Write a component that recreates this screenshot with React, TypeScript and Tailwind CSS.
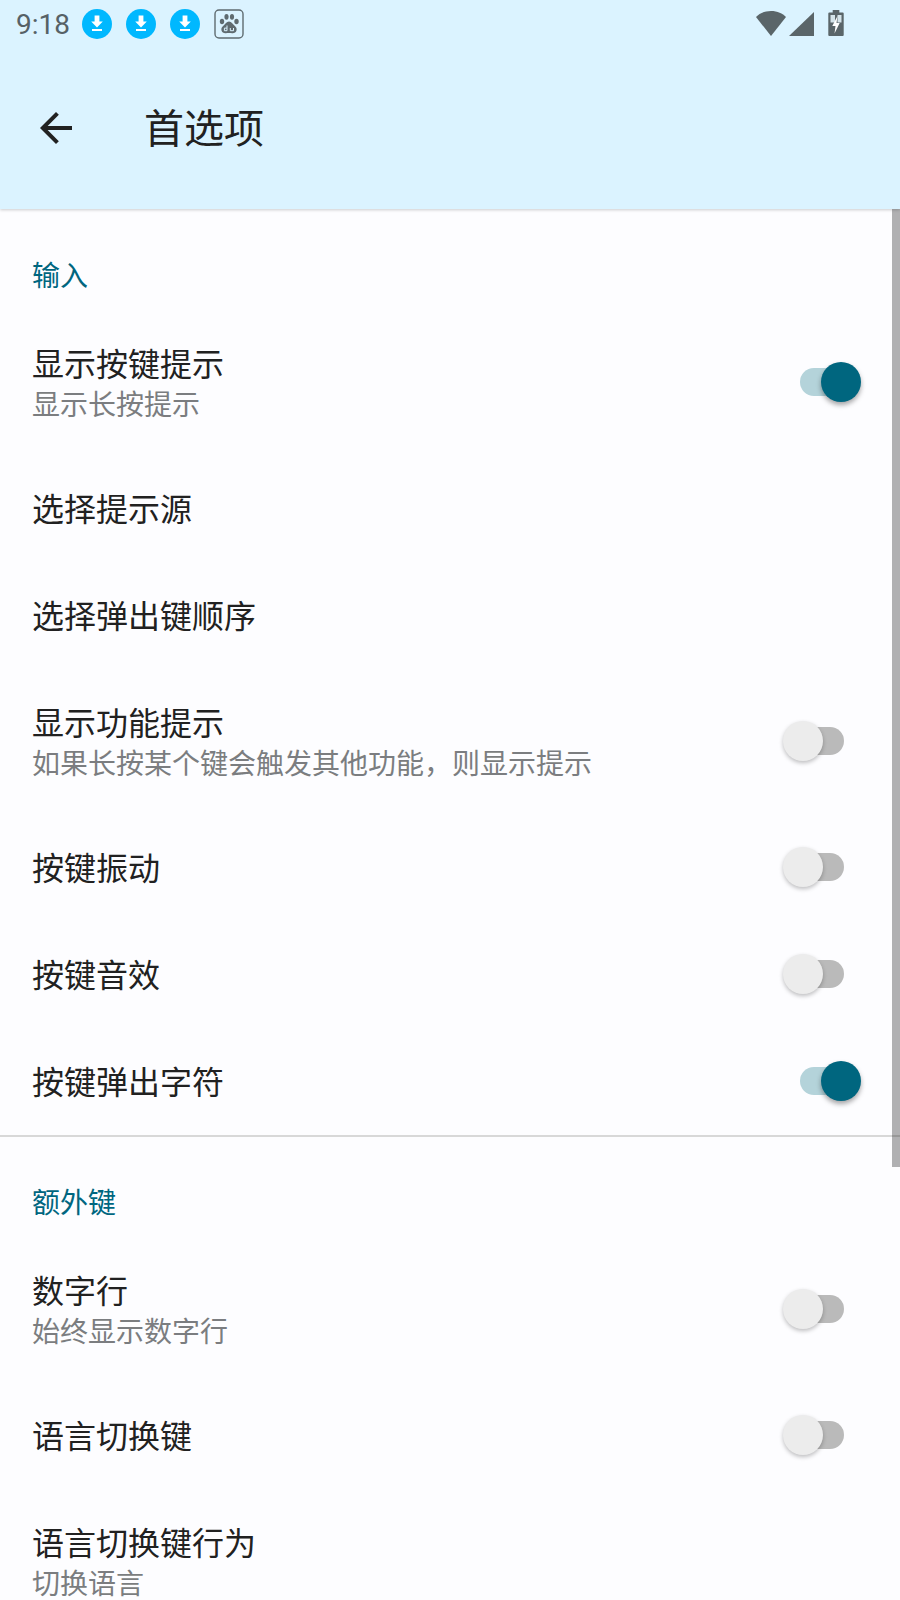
import React from "react";

const cjk = '"Noto Sans CJK SC", "Noto Sans", sans-serif';

function DownloadBadge() {
  return (
    <svg width="30" height="30" viewBox="0 0 30 30" className="block">
      <circle cx="15" cy="15" r="15" fill="#00b8ff" />
      <path d="M12.600 6.500h4.800v6h3.400L15 18.400 9.200 12.500h3.400z" fill="#fff" />
      <rect x="10" y="20" width="10" height="2" fill="#fff" />
    </svg>
  );
}

function BaiduBadge() {
  return (
    <svg width="30" height="30" viewBox="0 0 30 30" className="block">
      <rect x="1" y="1" width="28" height="28" rx="4" fill="none" stroke="#5f6b70" strokeWidth="1.400" />
      <g fill="#5f6b70">
        <ellipse cx="8" cy="12.500" rx="2.200" ry="2.800" />
        <ellipse cx="12.500" cy="7.800" rx="2.100" ry="2.900" />
        <ellipse cx="18" cy="7.800" rx="2.100" ry="2.900" />
        <ellipse cx="22.500" cy="12.500" rx="2.200" ry="2.800" />
        <path d="M15 12.500c-2.600 0-3.600 2.400-5.400 4-1.800 1.600-2.600 3-2.100 5 .5 2 2.400 2.900 4.300 2.700 1.200-.1 2.200-.3 3.200-.3s2 .2 3.200.3c1.900.2 3.800-.7 4.300-2.700.5-2-.3-3.400-2.100-5-1.800-1.600-2.800-4-5.400-4z" />
      </g>
      <path d="M13 16.500v5.200h-2.600v-2.600H13M16.300 19v2.700h3.200V19" fill="none" stroke="#dbf3ff" strokeWidth="1" />
    </svg>
  );
}

function StatusIcons() {
  return (
    <svg width="94" height="30" viewBox="0 0 94 30" className="block">
      <path d="M0 8C3.500 4.500 8.500 2 15 2S26.500 4.500 30 8L15 27z" fill="#5a6569" />
      <path d="M33 27 58 3V27z" fill="#5a6569" />
      <path d="M73.300 3.500h3.400V1h6.600v2.500h3.400a1 1 0 0 1 1 1V26a1 1 0 0 1-1 1H73.300a1 1 0 0 1-1-1V4.500a1 1 0 0 1 1-1z" fill="#5a6569" />
      <path d="M74.500 6h4.500v7.500h-4.500zM81.500 6h4v7.500h-4z" fill="#d5e4ea" />
      <path d="M81.500 7 76.300 17h3.200L78.500 24.500l5.200-10.500h-3.200z" fill="#fff" />
    </svg>
  );
}

function Toggle({ on }: { on?: boolean }) {
  return on ? (
    <div className="relative h-10 w-[61px] mr-[-2px]">
      <div className="absolute left-0 top-[6px] h-7 w-[41px] rounded-full bg-[#b4d3da]" />
      <div className="absolute left-[21px] top-0 h-10 w-10 rounded-full bg-[#00667f] shadow-[0_3px_5px_rgba(0,0,0,0.35)]" />
    </div>
  ) : (
    <div className="relative h-10 w-[61px] mr-[15px]">
      <div className="absolute left-[21px] top-[6px] h-7 w-10 rounded-full bg-[#bababa]" />
      <div className="absolute left-0 top-0 h-10 w-10 rounded-full bg-[#ececec] shadow-[0_2px_4px_rgba(0,0,0,0.25)]" />
    </div>
  );
}

function Row({ title, sub, toggle }: { title: string; sub?: string; toggle?: "on" | "off" }) {
  return (
    <div className={`flex items-center pl-[32px] pr-[41px] ${sub ? "h-[145px]" : "h-[107px]"}`}>
      <div className={`flex-1 min-w-0 ${sub ? "pt-[2px]" : "pb-[2px]"}`}>
        <div className="text-[32px] leading-[40px] text-[#212121] whitespace-nowrap">{title}</div>
        {sub && <div className="mt-px text-[28px] leading-[40px] text-[#7b7d80] whitespace-nowrap">{sub}</div>}
      </div>
      {toggle && <Toggle on={toggle === "on"} />}
    </div>
  );
}

function Section({ title, last }: { title: string; last?: boolean }) {
  return (
    <div className={`pl-[32px] text-[28px] leading-[40px] text-[#00667f] ${last ? "h-[99px] pt-[44px]" : "h-[100px] pt-[45px]"}`}>
      {title}
    </div>
  );
}

export default function App() {
  return (
    <div className="relative h-[1600px] w-[900px] overflow-hidden bg-[#fdfdff]" style={{ fontFamily: cjk }}>
      <header className="relative z-10 h-[209px] bg-[#dbf3ff] shadow-[0_1px_3px_rgba(0,0,0,0.2)]">
        <div className="flex h-12 items-center pl-4 pr-[50px]">
          <span className="mr-3 pt-[2px] text-[28px] leading-none text-[#566166]" style={{ fontFamily: "Roboto, sans-serif" }}>9:18</span>
          <div className="flex flex-1 items-center gap-[14px]">
            <DownloadBadge />
            <DownloadBadge />
            <DownloadBadge />
            <BaiduBadge />
          </div>
          <StatusIcons />
        </div>
        <div className="flex h-[161px] items-start pt-[48px]">
          <svg width="48" height="48" viewBox="0 0 24 24" className="ml-8 mt-2 block">
            <path d="M20 11H7.830l5.590-5.590L12 4l-8 8 8 8 1.410-1.410L7.830 13H20v-2z" fill="#212121" />
          </svg>
          <h1 className="ml-[64px] text-[40px] leading-[60px] font-normal text-[#212121]">首选项</h1>
        </div>
      </header>
      <Section title="输入" />
      <Row title="显示按键提示" sub="显示长按提示" toggle="on" />
      <Row title="选择提示源" />
      <Row title="选择弹出键顺序" />
      <Row title="显示功能提示" sub="如果长按某个键会触发其他功能，则显示提示" toggle="off" />
      <Row title="按键振动" toggle="off" />
      <Row title="按键音效" toggle="off" />
      <Row title="按键弹出字符" toggle="on" />
      <div className="mt-px h-[2px] bg-[#d8d8d8]" />
      <Section title="额外键" last />
      <Row title="数字行" sub="始终显示数字行" toggle="off" />
      <Row title="语言切换键" toggle="off" />
      <Row title="语言切换键行为" sub="切换语言" />
      <div className="absolute right-0 top-[209px] h-[958px] w-2 bg-[rgba(0,0,0,0.3)]" />
    </div>
  );
}
